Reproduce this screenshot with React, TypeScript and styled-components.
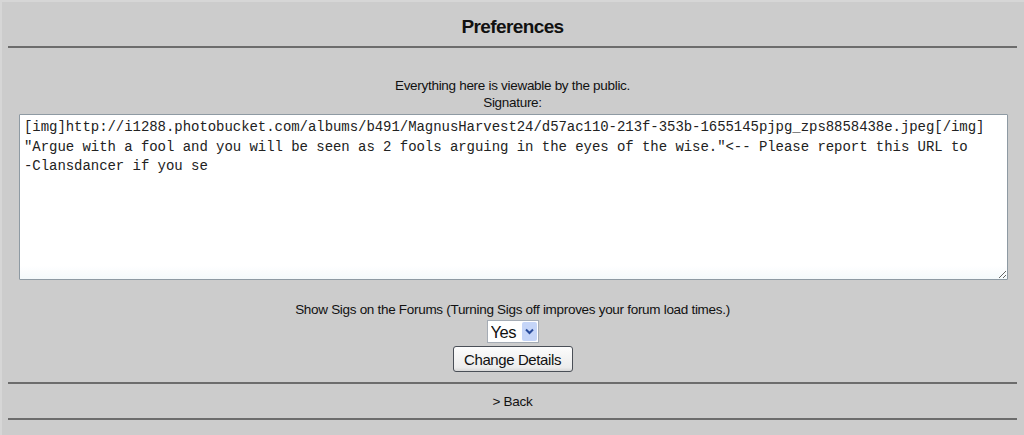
import React, { useState } from "react";
import styled, { createGlobalStyle } from "styled-components";

const GlobalStyle = createGlobalStyle`
  html, body {
    margin: 0;
    padding: 0;
    background: #cccccc;
  }
  body {
    font-family: "Liberation Sans", Arial, sans-serif;
    color: #111;
  }
`;

const SIGNATURE =
  "[img]http://i1288.photobucket.com/albums/b491/MagnusHarvest24/d57ac110-213f-353b-1655145pjpg_zps8858438e.jpeg[/img]\n" +
  '"Argue with a fool and you will be seen as 2 fools arguing in the eyes of the wise."<-- Please report this URL to\n' +
  "-Clansdancer if you se";

const Page = styled.div`
  width: 1024px;
  height: 435px;
  box-sizing: border-box;
  padding: 0 7px 0 6px;
  border-left: 2px solid #d6d6d6;
  border-top: 2px solid #d6d6d6;
  display: flex;
  flex-direction: column;
`;

const Title = styled.h1`
  margin: 0;
  height: 44px;
  display: flex;
  align-items: center;
  justify-content: center;
  padding-top: 6px;
  box-sizing: border-box;
  font-size: 19px;
  font-weight: bold;
  letter-spacing: -0.6px;
  color: #111;
`;

const Rule = styled.div`
  height: 2px;
  background: #6c6c6c;
  flex-shrink: 0;
`;

const Form = styled.form`
  display: flex;
  flex-direction: column;
  align-items: center;
  padding-top: 29px;
`;

const Note = styled.div`
  font-size: 13.5px;
  letter-spacing: -0.3px;
  line-height: 17px;
  text-align: center;
`;

const SignatureBox = styled.textarea`
  box-sizing: border-box;
  align-self: stretch;
  margin: 3px 9px 0 11px;
  height: 166px;
  padding: 3px 4px;
  border: 1px solid #8e9aa3;
  border-radius: 1px;
  background: linear-gradient(#fff 92%, #f4f9fb);
  font-family: "Liberation Mono", "Courier New", monospace;
  font-size: 14px;
  letter-spacing: -0.05px;
  line-height: 19.5px;
  color: #222;
  white-space: pre;
  overflow: hidden;
  resize: both;
  outline: none;
`;

const SigsLabel = styled(Note)`
  margin-top: 21px;
`;

const SelectWrap = styled.div`
  position: relative;
  margin-top: 2px;
  width: 52px;
  height: 23px;
`;

const Select = styled.select`
  appearance: none;
  box-sizing: border-box;
  width: 100%;
  height: 100%;
  padding: 0 0 0 3px;
  border: 1px solid #a5acb5;
  background: #fff;
  font-family: "Liberation Sans", Arial, sans-serif;
  font-size: 16.5px;
  letter-spacing: -0.4px;
  color: #111;
  outline: none;
`;

const ArrowBox = styled.span`
  position: absolute;
  top: 2px;
  right: 2px;
  width: 15px;
  height: 19px;
  display: flex;
  align-items: center;
  justify-content: center;
  background: #c5d5f8;
  border-radius: 2px;
  pointer-events: none;
`;

const Button = styled.button`
  margin-top: 3px;
  width: 120px;
  height: 26px;
  border: 1px solid #4a4f57;
  border-radius: 3px;
  background: linear-gradient(#fcfcfc, #ececec 85%, #d8d8d8);
  font-family: "Liberation Sans", Arial, sans-serif;
  font-size: 15px;
  letter-spacing: -0.4px;
  color: #111;
  padding: 0;
  cursor: pointer;
`;

const Footer = styled.div`
  height: 34px;
  display: flex;
  align-items: center;
  justify-content: center;
  font-size: 13.5px;
  letter-spacing: -0.3px;
`;

const BackLink = styled.a`
  color: #111;
  text-decoration: none;
  cursor: pointer;
`;

const ButtonRule = styled(Rule)`
  margin-top: 10px;
`;

export default function App() {
  const [sig, setSig] = useState(SIGNATURE);
  const [showSigs, setShowSigs] = useState("Yes");

  return (
    <>
      <GlobalStyle />
      <Page>
        <Title>Preferences</Title>
        <Rule />
        <Form onSubmit={(e) => e.preventDefault()}>
          <Note>Everything here is viewable by the public.</Note>
          <Note>Signature:</Note>
          <SignatureBox
            value={sig}
            onChange={(e) => setSig(e.target.value)}
            spellCheck={false}
          />
          <SigsLabel>
            Show Sigs on the Forums (Turning Sigs off improves your forum load
            times.)
          </SigsLabel>
          <SelectWrap>
            <Select
              value={showSigs}
              onChange={(e) => setShowSigs(e.target.value)}
            >
              <option>Yes</option>
              <option>No</option>
            </Select>
            <ArrowBox>
              <svg width="9" height="7" viewBox="0 0 9 7">
                <path
                  d="M1 1.5 L4.5 5 L8 1.5"
                  fill="none"
                  stroke="#2a4c9c"
                  strokeWidth="2"
                />
              </svg>
            </ArrowBox>
          </SelectWrap>
          <Button type="submit">Change Details</Button>
        </Form>
        <ButtonRule />
        <Footer>
          <BackLink>&gt; Back</BackLink>
        </Footer>
        <Rule />
      </Page>
    </>
  );
}
